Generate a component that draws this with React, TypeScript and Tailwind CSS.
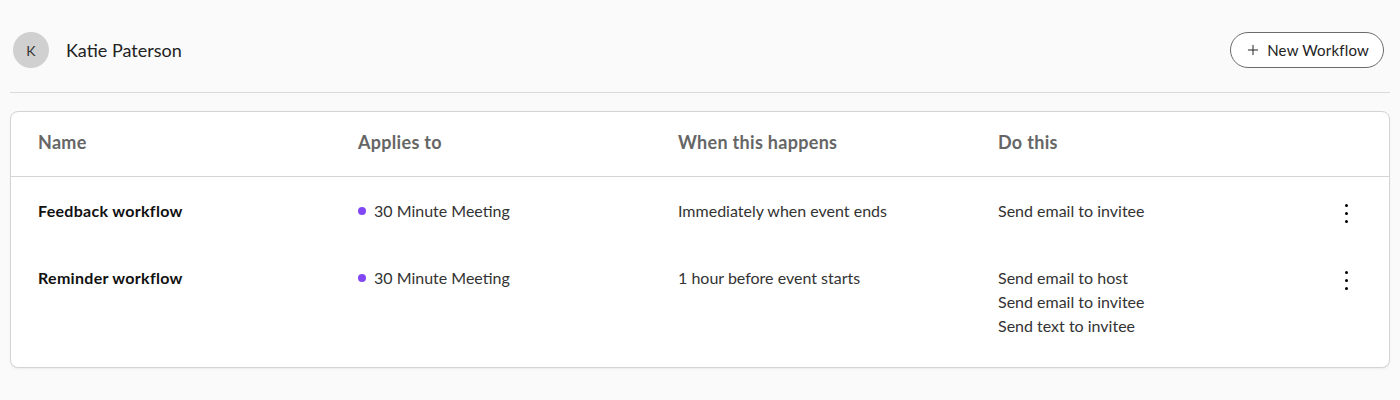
import { Plus } from "lucide-react";

const rows = [
  {
    name: "Feedback workflow",
    applies: "30 Minute Meeting",
    when: "Immediately when event ends",
    actions: ["Send email to invitee"],
  },
  {
    name: "Reminder workflow",
    applies: "30 Minute Meeting",
    when: "1 hour before event starts",
    actions: ["Send email to host", "Send email to invitee", "Send text to invitee"],
  },
];

function Kebab() {
  return (
    <div className="flex flex-col items-center gap-[5px] pt-[2px]">
      <span className="h-[3px] w-[3px] rounded-full bg-black" />
      <span className="h-[3px] w-[3px] rounded-full bg-black" />
      <span className="h-[3px] w-[3px] rounded-full bg-black" />
    </div>
  );
}

export default function App() {
  return (
    <div
      className="min-h-[400px] bg-[#fafafa] px-[10px] pt-[32px] text-[#1a1a1a]"
      style={{ fontFamily: "Lato, 'Liberation Sans', sans-serif" }}
    >
      <div className="flex items-center justify-between border-b border-[#dadada] pb-[24px] pl-[3px] pr-[6px]">
        <div className="flex items-center gap-[17px]">
          <div className="flex h-[36px] w-[36px] items-center justify-center rounded-full bg-[#d0d0d0] text-[14px] text-[#333]">
            K
          </div>
          <span className="text-[18px] text-[#222]">Katie Paterson</span>
        </div>
        <button className="flex h-[36px] items-center gap-[6px] rounded-full border border-[#6b6b6b] bg-white px-[14px] text-[15px] tracking-[0.2px] text-[#222]">
          <Plus className="h-[16px] w-[16px]" strokeWidth={1.5} />
          New Workflow
        </button>
      </div>

      <div className="mt-[18px] rounded-[8px] border border-[#d4d4d4] bg-white pb-[8px] shadow-[0_1px_2px_rgba(0,0,0,0.06)]">
        <div className="grid grid-cols-[320px_320px_320px_1fr] border-b border-[#d4d4d4] px-[27px] pb-[22px] pt-[18px] text-[18px] font-bold leading-[24px] tracking-[0.3px] text-[#666]">
          <div>Name</div>
          <div>Applies to</div>
          <div>When this happens</div>
          <div>Do this</div>
        </div>
        {rows.map((r) => (
          <div
            key={r.name}
            className="grid grid-cols-[320px_320px_320px_1fr] px-[27px] pb-[21px] pt-[22px] text-[16px] leading-[24px]"
          >
            <div className="font-bold tracking-[0.3px] text-[#111]">{r.name}</div>
            <div className="flex items-center gap-[8px] self-start text-[#333]">
              <span className="h-[8px] w-[8px] rounded-full bg-[#8247f5]" />
              {r.applies}
            </div>
            <div className="text-[#333]">{r.when}</div>
            <div className="flex items-start justify-between pr-[14px] text-[#333]">
              <div>
                {r.actions.map((a) => (
                  <div key={a}>{a}</div>
                ))}
              </div>
              <div className="pt-[3px]">
                <Kebab />
              </div>
            </div>
          </div>
        ))}
      </div>
    </div>
  );
}
